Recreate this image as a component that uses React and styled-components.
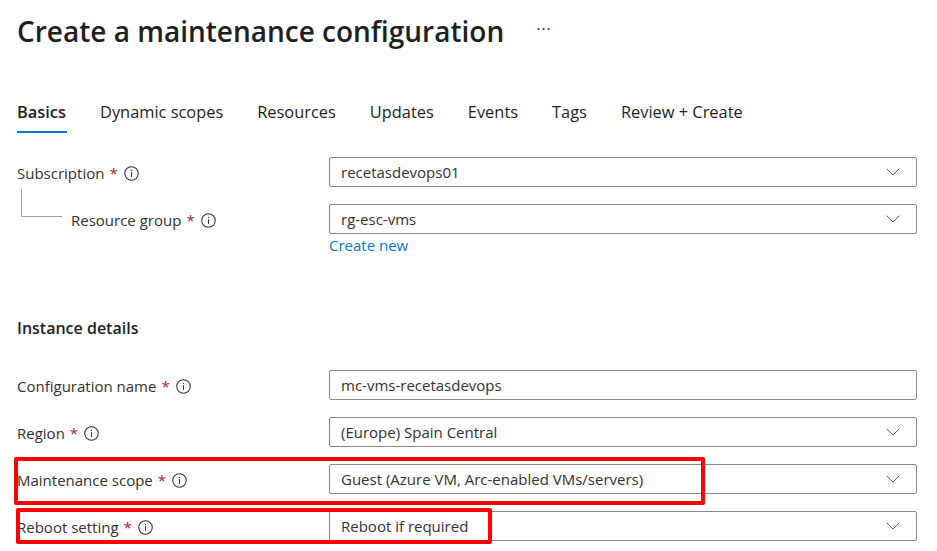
import React from "react";
import styled, { createGlobalStyle } from "styled-components";

const COLORS = {
  text: "#323130",
  title: "#201f1e",
  border: "#8a8886",
  blue: "#0078d4",
  required: "#a4262c",
  tree: "#a19f9d",
  highlight: "#ff0000",
};

const GlobalStyle = createGlobalStyle`
  html, body {
    margin: 0;
    padding: 0;
    background: #ffffff;
  }
  body {
    font-family: "Segoe UI", "Open Sans", "Noto Sans", sans-serif;
    color: ${COLORS.text};
  }
`;

const Page = styled.div`
  position: relative;
  width: 937px;
  height: 551px;
  padding: 0 20px 0 17px;
  box-sizing: border-box;
  overflow: hidden;
`;

const Header = styled.div`
  display: flex;
  align-items: center;
  gap: 32px;
  height: 62px;
`;

const Title = styled.h1`
  margin: 0;
  font-size: 28px;
  font-weight: 600;
  color: ${COLORS.title};
`;

const More = styled.span`
  font-size: 16px;
  color: ${COLORS.text};
  letter-spacing: 1px;
  margin-top: -4px;
`;

const TabBar = styled.div`
  display: flex;
  gap: 34px;
  margin-top: 36px;
  height: 35px;
`;

const Tab = styled.div`
  position: relative;
  font-size: 16.4px;
  font-weight: ${({ active }) => (active ? 600 : 400)};
  color: ${COLORS.title};
  line-height: 28px;

  ${({ active }) =>
    active &&
    `
    &::after {
      content: "";
      position: absolute;
      left: 0;
      right: -1px;
      bottom: 0;
      height: 2px;
      background: ${COLORS.blue};
    }
  `}
`;

const Form = styled.div`
  display: grid;
  grid-template-columns: 312px 1fr;
  row-gap: 17px;
  margin-top: 24px;
`;

const Label = styled.div`
  display: flex;
  align-items: center;
  height: 30px;
  padding-top: 2px;
  box-sizing: border-box;
  font-size: 15px;
  padding-left: ${({ indent }) => (indent ? 54 : 0)}px;
  position: relative;
`;

const Required = styled.span`
  color: ${COLORS.required};
  margin-left: 5px;
`;

const InfoWrap = styled.span`
  display: inline-flex;
  margin-left: 6px;
`;

const TreeLine = styled.span`
  position: absolute;
  left: 4px;
  top: -15px;
  width: 40px;
  height: 27px;
  border-left: 1px solid ${COLORS.tree};
  border-bottom: 1px solid ${COLORS.tree};
`;

const Field = styled.div`
  display: flex;
  flex-direction: column;
`;

const Box = styled.div`
  display: flex;
  align-items: center;
  justify-content: space-between;
  height: 30px;
  box-sizing: border-box;
  border: 1px solid ${COLORS.border};
  border-radius: 2px;
  padding: 0 16px 0 11px;
  font-size: 15px;
  color: ${COLORS.text};
`;

const Link = styled.a`
  font-size: 15px;
  color: ${COLORS.blue};
  margin-top: 1px;
  height: 20px;
  line-height: 20px;
  cursor: pointer;
`;

const SectionTitle = styled.div`
  grid-column: 1 / -1;
  font-size: 16px;
  font-weight: 600;
  color: ${COLORS.title};
  margin-top: 45px;
  margin-bottom: 14px;
`;

const Highlight = styled.div`
  position: absolute;
  border: 4px solid ${COLORS.highlight};
  border-radius: 2px;
  box-sizing: border-box;
  pointer-events: none;
`;

const InfoIcon = () => (
  <svg width="15" height="15" viewBox="0 0 16 16" fill="none">
    <circle cx="8" cy="8" r="7.2" stroke={COLORS.text} strokeWidth="1.1" />
    <rect x="7.45" y="6.6" width="1.1" height="5" fill={COLORS.text} />
    <circle cx="8" cy="4.7" r="0.75" fill={COLORS.text} />
  </svg>
);

const Chevron = () => (
  <svg width="14" height="8" viewBox="0 0 14 8" fill="none">
    <path d="M0.7 0.7 L7 7 L13.3 0.7" stroke="#605e5c" strokeWidth="1" />
  </svg>
);

const FieldLabel = ({ text, indent, tree }) => (
  <Label indent={indent}>
    {tree && <TreeLine />}
    {text}
    <Required>*</Required>
    <InfoWrap>
      <InfoIcon />
    </InfoWrap>
  </Label>
);

const Dropdown = ({ value }) => (
  <Box>
    <span>{value}</span>
    <Chevron />
  </Box>
);

const tabs = [
  "Basics",
  "Dynamic scopes",
  "Resources",
  "Updates",
  "Events",
  "Tags",
  "Review + Create",
];

const App = () => (
  <>
    <GlobalStyle />
    <Page>
      <Header>
        <Title>Create a maintenance configuration</Title>
        <More>···</More>
      </Header>
      <TabBar>
        {tabs.map((t, i) => (
          <Tab key={t} active={i === 0}>
            {t}
          </Tab>
        ))}
      </TabBar>
      <Form>
        <FieldLabel text="Subscription" />
        <Dropdown value="recetasdevops01" />

        <FieldLabel text="Resource group" indent tree />
        <Field>
          <Dropdown value="rg-esc-vms" />
          <Link>Create new</Link>
        </Field>

        <SectionTitle>Instance details</SectionTitle>

        <FieldLabel text="Configuration name" />
        <Box>mc-vms-recetasdevops</Box>

        <FieldLabel text="Region" />
        <Dropdown value="(Europe) Spain Central" />

        <FieldLabel text="Maintenance scope" />
        <Dropdown value="Guest (Azure VM, Arc-enabled VMs/servers)" />

        <FieldLabel text="Reboot setting" />
        <Dropdown value="Reboot if required" />
      </Form>
      <Highlight style={{ left: 14, top: 457, width: 691, height: 48 }} />
      <Highlight style={{ left: 16, top: 508, width: 476, height: 36 }} />
    </Page>
  </>
);

export default App;
